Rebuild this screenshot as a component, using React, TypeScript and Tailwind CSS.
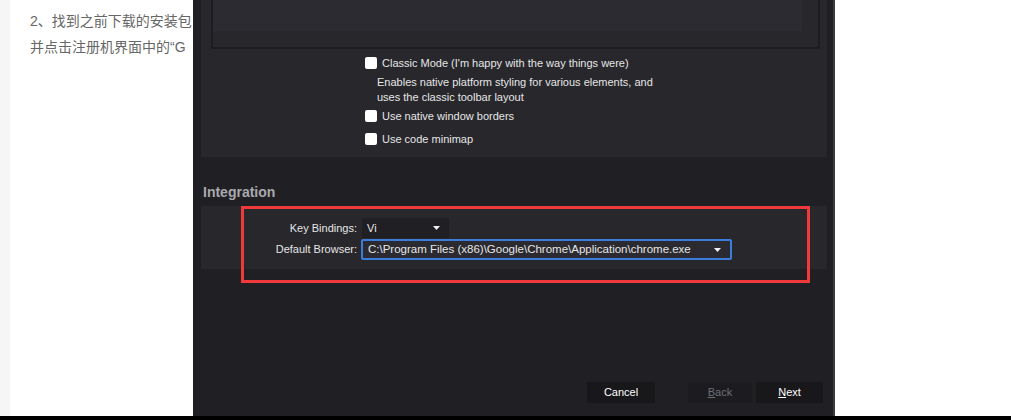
const ui = { fontFamily: '"Liberation Sans", Arial, sans-serif' };

function Check({ label }: { label: string }) {
    return (
        <div className="flex items-center h-[16px]">
            <span className="w-[12px] h-[12px] rounded-[2px] bg-white mr-[5px]" />
            <span>{label}</span>
        </div>
    );
}

function Caret() {
    return (
        <svg width="7" height="4" viewBox="0 0 7 4" className="shrink-0">
            <path d="M0 0 L7 0 L3.5 4 Z" fill="#f0f0f0" />
        </svg>
    );
}

export default function App() {
    return (
        <div className="w-[1011px] h-[420px] flex flex-col overflow-hidden bg-white">
            <div className="flex h-[416px]">
                <div className="w-[10px] bg-[#f6f6f6]" />
                <div
                    className="w-[183px] overflow-hidden whitespace-nowrap pl-[20px] pt-[8px] text-[14px] leading-[26px] text-[#666]"
                    style={{ fontFamily: '"Liberation Sans", "Noto Sans CJK SC", sans-serif' }}>
                    <p>2、找到之前下载的安装包</p>
                    <p>并点击注册机界面中的“G</p>
                </div>

                {/* dialog */}
                <div
                    className="relative w-[642px] flex flex-col bg-[#202024] border-r-2 border-[#3a3a40] pl-[8px] pr-[6px] text-[11px] text-[#e6e6e6] whitespace-nowrap"
                    style={ui}>
                    <div className="h-[157px] bg-[#27272c] flex flex-col">
                        <div className="ml-[10px] w-[609px] h-[49px] border-x-2 border-b-2 border-[#1d1d21] bg-[#27272c] flex flex-col">
                            <div className="h-[31px] bg-[#2b2b31] mr-[16px]" />
                        </div>
                        <div className="ml-[164px] mt-[6px] flex flex-col">
                            <Check label="Classic Mode (I'm happy with the way things were)" />
                            <div className="pl-[12px] mt-[4px] leading-[15px]">
                                <p>Enables native platform styling for various elements, and</p>
                                <p>uses the classic toolbar layout</p>
                            </div>
                            <div className="mt-[3px]">
                                <Check label="Use native window borders" />
                            </div>
                            <div className="mt-[7px]">
                                <Check label="Use code minimap" />
                            </div>
                        </div>
                    </div>

                    <div className="mt-[27px] h-[16px] leading-[16px] pl-[2px] text-[14px] font-bold text-[#a9a9ae]">
                        Integration
                    </div>

                    <div className="mt-[6px] h-[63px] bg-[#27272c] pt-[12px] flex flex-col gap-[1px]">
                        <div className="flex items-center h-[20px]">
                            <span className="w-[160px] text-right pr-[4px]">Key Bindings:</span>
                            <div className="ml-[1px] w-[87px] h-[20px] bg-[#1f1f24] flex items-center justify-between pl-[5px] pr-[9px]">
                                <span>Vi</span>
                                <Caret />
                            </div>
                        </div>
                        <div className="flex items-center h-[21px]">
                            <span className="w-[160px] text-right pr-[4px]">Default Browser:</span>
                            <div className="w-[371px] h-[21px] bg-[#2a2a30] border-2 border-[#3b7ddd] rounded-[2px] flex items-center justify-between pl-[5px] pr-[9px]">
                                <span className="text-[11.5px]">C:\Program Files (x86)\Google\Chrome\Application\chrome.exe</span>
                                <Caret />
                            </div>
                        </div>
                    </div>

                    <div className="flex-1" />

                    <div className="flex justify-end items-center mb-[13px] pr-[4px] h-[21px]">
                        <button className="w-[68px] h-[21px] bg-[#18181b] text-white">Cancel</button>
                        <button className="ml-[33px] w-[64px] h-[21px] bg-[#1c1c20] text-[#6f6f74]">
                            <u>B</u>ack
                        </button>
                        <button className="ml-[4px] w-[67px] h-[21px] bg-[#18181b] text-white">
                            <u>N</u>ext
                        </button>
                    </div>

                    {/* red annotation frame */}
                    <div className="absolute left-[48px] top-[206px] w-[569px] h-[77px] border-[3px] border-[#f0393b]" />
                </div>
                <div className="flex-1 bg-white" />
            </div>
            <div className="h-[4px] bg-black" />
        </div>
    );
}
